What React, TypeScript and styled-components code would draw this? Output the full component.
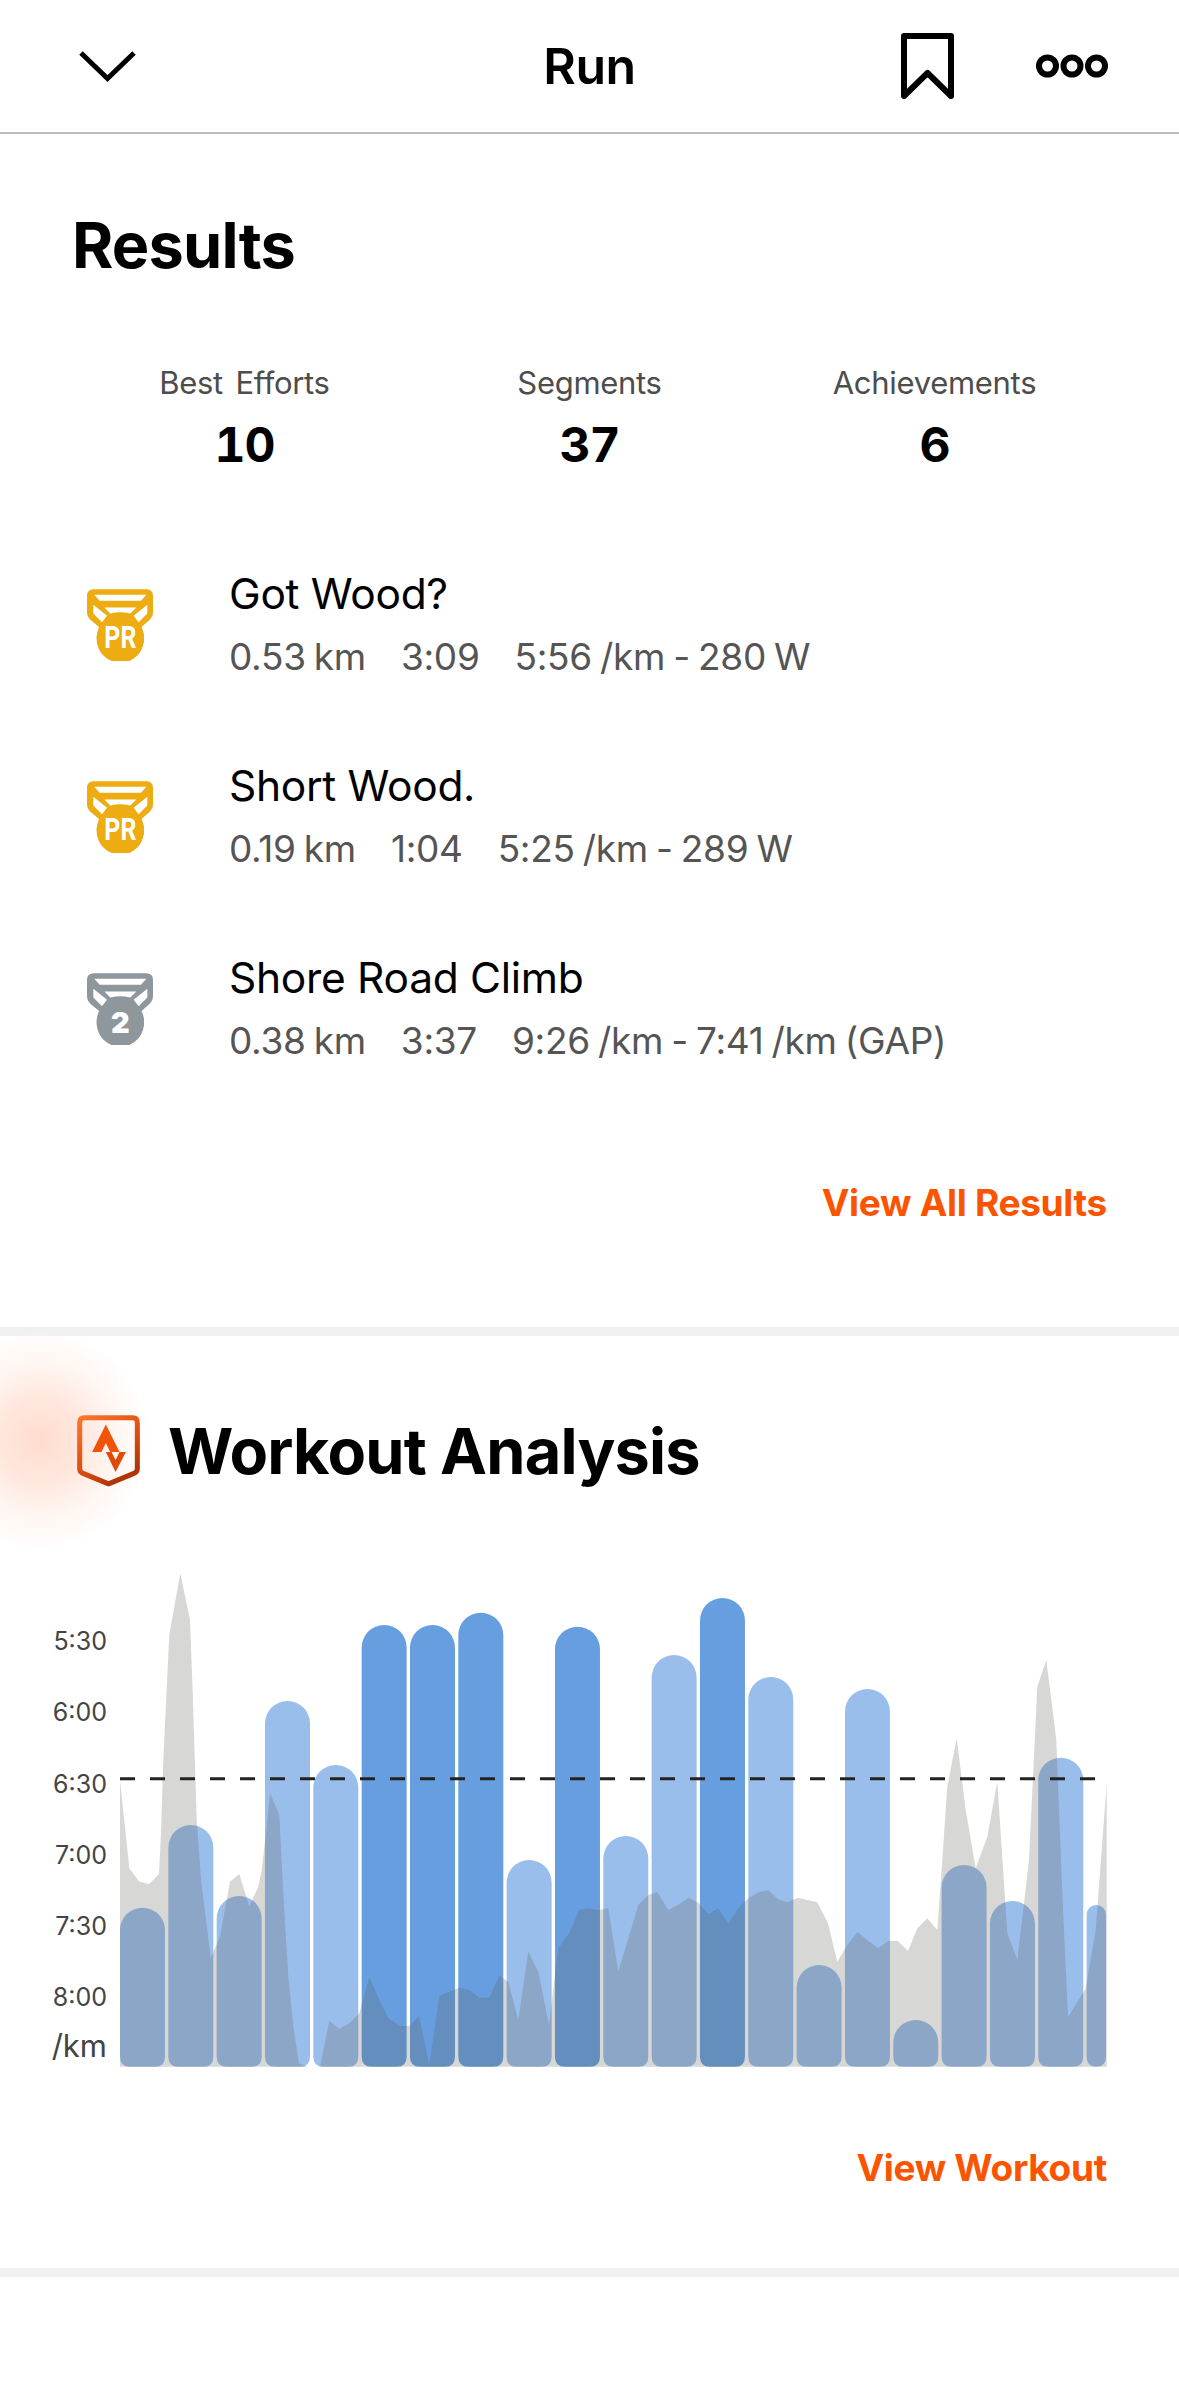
import React from "react";
import styled, { createGlobalStyle } from "styled-components";

const Global = createGlobalStyle`
  html, body { margin: 0; padding: 0; background: #fff; }
  body { font-family: Inter, "Liberation Sans", sans-serif; color: #000; }
`;

const Page = styled.div`
  position: relative;
  width: 1179px;
  height: 2396px;
  overflow: hidden;
  background: #fff;
`;
const Header = styled.header`
  display: grid;
  grid-template-columns: 1fr auto 1fr;
  align-items: center;
  height: 132px;
  border-bottom: 2px solid #bdbdbd;
  box-sizing: content-box;
`;
const HeaderLeft = styled.div`
  display: flex;
  padding-left: 79px;
`;
const HeaderTitle = styled.h1`
  margin: 0;
  font-size: 50px;
  line-height: 56px;
  font-weight: 600;
  letter-spacing: -0.5px;
`;
const HeaderRight = styled.div`
  display: flex;
  justify-content: flex-end;
  align-items: center;
  gap: 82px;
  padding-right: 71px;
`;
const Section = styled.section<{ $top: number; $bottom: number }>`
  padding: ${(p) => p.$top}px 72px ${(p) => p.$bottom}px;
`;
const SectionTitle = styled.h2`
  margin: 0;
  font-size: 63px;
  line-height: 72px;
  font-weight: 700;
  letter-spacing: -0.8px;
`;
const Stats = styled.div`
  display: grid;
  grid-template-columns: repeat(3, 345px);
  margin-top: 82px;
`;
const Stat = styled.div`
  text-align: center;
`;
const StatLabel = styled.div`
  font-size: 31px;
  line-height: 40px;
  color: #4d4d4d;
  letter-spacing: -0.3px;
  word-spacing: 4px;
`;
const StatValue = styled.div`
  margin-top: 12px;
  font-size: 48px;
  line-height: 60px;
  font-weight: 700;
  font-variant-numeric: tabular-nums;
  letter-spacing: -1px;
`;
const Rows = styled.div`
  display: flex;
  flex-direction: column;
  gap: 78px;
  margin-top: 93px;
`;
const Row = styled.div`
  display: flex;
  align-items: flex-start;
`;
const MedalSlot = styled.div`
  width: 157px;
  padding: 21px 0 0 15px;
  box-sizing: border-box;
  flex: none;
`;
const RowBody = styled.div`
  display: flex;
  flex-direction: column;
  gap: 12px;
`;
const RowTitle = styled.div`
  font-size: 42.5px;
  line-height: 52px;
  letter-spacing: -0.3px;
`;
const RowMeta = styled.div`
  display: flex;
  gap: 35px;
  font-size: 37px;
  line-height: 50px;
  color: #555;
  letter-spacing: -0.3px;
  word-spacing: -2px;
`;
const LinkRow = styled.div<{ $top: number }>`
  display: flex;
  justify-content: flex-end;
  margin-top: ${(p) => p.$top}px;
`;
const ActionLink = styled.a`
  font-size: 37px;
  line-height: 48px;
  font-weight: 700;
  color: #fb5400;
  letter-spacing: -0.3px;
`;
const Band = styled.div`
  height: 9px;
  background: #f1f1f1;
`;
const Glow = styled.div`
  position: absolute;
  left: -70px;
  top: 1330px;
  width: 220px;
  height: 220px;
  border-radius: 50%;
  background: radial-gradient(closest-side, #ffdccd 0%, #ffe8df 40%, #fff6f2 70%, #ffffff00 100%);
  pointer-events: none;
`;
const AnalysisHead = styled.div`
  position: relative;
  display: flex;
  align-items: center;
  gap: 28px;
  padding-left: 5px;
`;
const ChartRow = styled.div`
  display: flex;
  align-items: flex-start;
  gap: 13px;
  margin: 83px 0 0 -72px;
`;
const Axis = styled.div`
  width: 107px;
  padding-top: 36px;
  display: flex;
  flex-direction: column;
  align-items: flex-end;
  flex: none;
`;
const AxisLabel = styled.div`
  font-size: 25px;
  line-height: 71.3px;
  color: #444;
`;
const AxisUnit = styled.div`
  font-size: 31px;
  line-height: 24px;
  color: #444;
`;
const ChartSvg = styled.svg`
  display: block;
  flex: none;
`;

const ORIGIN_X = 120;
const ORIGIN_Y = 1570;
const BASE = 2066.7;
const PITCH = 48.33;
const BAR_W = 45;

const bars: { top: number; hot?: boolean; w?: number }[] = [
  { top: 1907.7 }, { top: 1825 }, { top: 1896 }, { top: 1701 }, { top: 1765 },
  { top: 1625, hot: true }, { top: 1625, hot: true }, { top: 1612.7, hot: true },
  { top: 1860 }, { top: 1626.7, hot: true }, { top: 1836 }, { top: 1655 },
  { top: 1598, hot: true }, { top: 1677 }, { top: 1965 }, { top: 1689 },
  { top: 2020 }, { top: 1865 }, { top: 1901 }, { top: 1757.7 }, { top: 1905, w: 19.4 },
];

const z4 = [[360,1520],[360,660],[388,925],[418,965],[447,972],[477,942],[483,820],[490,600],[508,225],[541,40],[570,180],[578,400],[590,780],[603,960],[618,1080],[632,1195],[660,1130],[690,965],[718,942],[748,1040],[775,980],[785,930],[800,800],[810,700],[838,765],[850,1000],[865,1250],[880,1400],[897,1510],[925,1520],[960,1520],[988,1383],[1018,1407],[1048,1390],[1078,1360],[1108,1252],[1138,1320],[1165,1375]];
const z5 = [[0,1398],[28,1398],[57,1368],[88,1515],[118,1308],[148,1295],[178,1283],[208,1290],[238,1313],[268,1313],[298,1247],[325,1265],[355,1380],[385,1175],[415,1235],[447,1395],[475,1165],[510,1115],[537,1050],[565,1045],[595,1050],[625,1045],[655,1235],[715,1035],[745,1005],[772,997],[805,1050],[835,1035],[865,1013],[895,1028],[925,1063],[955,1045],[985,1092],[1015,1045],[1045,1015],[1075,997],[1105,990]];
const z6 = [[-3,1018],[25,1027],[57,1013],[85,1020],[115,1027],[147,1090],[175,1205],[205,1155],[235,1115],[265,1140],[297,1165],[327,1143],[357,1143],[387,1173],[415,1105],[445,1075],[475,1110],[490,900],[505,680],[533,535],[560,750],[590,925],[625,830],[655,665],[685,1120],[715,1200],[735,1030],[750,900],[775,380],[802,300],[832,540],[850,1000],[867,1372],[920,1285],[950,1110],[983,670],[983,1520]];

const toLocal = (base: number) => (p: number[]) =>
  `${(base + p[0] / 3 - ORIGIN_X).toFixed(1)},${(1560 + p[1] / 3 - ORIGIN_Y).toFixed(1)}`;
const areaPoints = [...z4.map(toLocal(0)), ...z5.map(toLocal(400)), ...z6.map(toLocal(779))].join(" ");

const barPath = (x: number, top: number, w: number) => {
  const r = w / 2;
  const b = 10;
  const y = top - ORIGIN_Y;
  const h = BASE - ORIGIN_Y;
  return `M${x} ${y + r}A${r} ${r} 0 0 1 ${x + w} ${y + r}V${h - b}Q${x + w} ${h} ${x + w - b} ${h}H${x + b}Q${x} ${h} ${x} ${h - b}Z`;
};

const Medal = ({ color, label, pr }: { color: string; label: string; pr?: boolean }) => (
  <svg width="66" height="72" viewBox="110 87 198 215" role="img">
    <path
      fill={color}
      d="M130 87H288Q308 87 308 107V158Q308 170 299 178L272 202A71 71 0 1 1 148 202L119 178Q110 170 110 158V107Q110 87 130 87Z"
    />
    <path
      fill="#fff"
      d="M132 104H288L272 122H148ZM162 142H258L240 160Q210 152 180 160ZM129 134L170 167L155 186L129 160ZM291 134V160L265 186L250 167Z"
    />
    <circle cx="210" cy="232" r="71" fill={color} />
    <text
      x="210"
      y={pr ? 265 : 266}
      textAnchor="middle"
      fill="#fff"
      fontFamily={pr ? "Roboto, sans-serif" : "Inter, sans-serif"}
      fontWeight={pr ? 700 : 900}
      fontSize={pr ? 92 : 86}
      textLength={pr ? 96 : 56}
      lengthAdjust="spacingAndGlyphs"
    >
      {label}
    </text>
  </svg>
);

const StravaMark = () => (
  <svg width="63" height="72" viewBox="230 292 188 214" role="img">
    <defs>
      <linearGradient id="shield" x1="0" y1="0" x2="0.6" y2="1">
        <stop offset="0" stopColor="#f9772c" />
        <stop offset="0.55" stopColor="#e2500f" />
        <stop offset="1" stopColor="#b03404" />
      </linearGradient>
    </defs>
    <path
      fill="none"
      stroke="url(#shield)"
      strokeWidth="15"
      strokeLinejoin="round"
      d="M252 300H396Q410 300 410 314V452Q410 462 400 466L324 497L248 466Q238 462 238 452V314Q238 300 252 300Z"
    />
    <path fill="#f05408" d="M316 320L357 402H329L316 375L303 402H275Z" />
    <path fill="#e24a08" fillRule="evenodd" d="M316 402H376L345 462ZM333 402L345 426L357 402Z" />
  </svg>
);

const results = [
  { name: "Got Wood?", meta: ["0.53 km", "3:09", "5:56 /km - 280 W"], color: "#ecac12", label: "PR", pr: true },
  { name: "Short Wood.", meta: ["0.19 km", "1:04", "5:25 /km - 289 W"], color: "#ecac12", label: "PR", pr: true },
  { name: "Shore Road Climb", meta: ["0.38 km", "3:37", "9:26 /km - 7:41 /km (GAP)"], color: "#8e979b", label: "2", pr: false },
];

const stats = [
  ["Best Efforts", "10"],
  ["Segments", "37"],
  ["Achievements", "6"],
];

export default function App() {
  return (
    <Page>
      <Global />
      <Header>
        <HeaderLeft>
          <svg width="57" height="31" viewBox="0 0 57 31" fill="none" stroke="#000" strokeWidth="5">
            <path d="M2 2L28.5 27.5L55 2" />
          </svg>
        </HeaderLeft>
        <HeaderTitle>Run</HeaderTitle>
        <HeaderRight>
          <svg width="53" height="66" viewBox="0 0 53 66" fill="none" stroke="#000" strokeWidth="6" strokeLinejoin="round">
            <path d="M3 3H50V63L26.5 40L3 63Z" />
          </svg>
          <svg width="72" height="24" viewBox="0 0 72 24" fill="none" stroke="#000" strokeWidth="6">
            <circle cx="11.5" cy="12" r="8.5" />
            <circle cx="36" cy="12" r="8.5" />
            <circle cx="60.5" cy="12" r="8.5" />
          </svg>
        </HeaderRight>
      </Header>

      <Section $top={75} $bottom={100}>
        <SectionTitle>Results</SectionTitle>
        <Stats>
          {stats.map(([label, value]) => (
            <Stat key={label}>
              <StatLabel>{label}</StatLabel>
              <StatValue>{value}</StatValue>
            </Stat>
          ))}
        </Stats>
        <Rows>
          {results.map((r) => (
            <Row key={r.name}>
              <MedalSlot>
                <Medal color={r.color} label={r.label} pr={r.pr} />
              </MedalSlot>
              <RowBody>
                <RowTitle>{r.name}</RowTitle>
                <RowMeta>
                  {r.meta.map((m) => (
                    <span key={m}>{m}</span>
                  ))}
                </RowMeta>
              </RowBody>
            </Row>
          ))}
        </Rows>
        <LinkRow $top={113}>
          <ActionLink>View All Results</ActionLink>
        </LinkRow>
      </Section>
      <Band />

      <Glow />
      <Section $top={79} $bottom={76}>
        <AnalysisHead>
          <StravaMark />
          <SectionTitle>Workout Analysis</SectionTitle>
        </AnalysisHead>
        <ChartRow>
          <Axis>
            {["5:30", "6:00", "6:30", "7:00", "7:30", "8:00"].map((t) => (
              <AxisLabel key={t}>{t}</AxisLabel>
            ))}
            <AxisUnit>/km</AxisUnit>
          </Axis>
          <ChartSvg width="987" height="497" viewBox="0 0 987 497">
            {bars.map((b, i) => (
              <path
                key={i}
                d={barPath(i * PITCH, b.top, b.w ?? BAR_W)}
                fill={b.hot ? "#669ee0" : "#9abeeb"}
              />
            ))}
            <polygon points={areaPoints} fill="#605e58" fillOpacity="0.25" />
            <line x1="0" y1="208.7" x2="975" y2="208.7" stroke="#222" strokeWidth="3" strokeDasharray="15 15" />
          </ChartSvg>
        </ChartRow>
        <LinkRow $top={77}>
          <ActionLink>View Workout</ActionLink>
        </LinkRow>
      </Section>
      <Band />
    </Page>
  );
}
